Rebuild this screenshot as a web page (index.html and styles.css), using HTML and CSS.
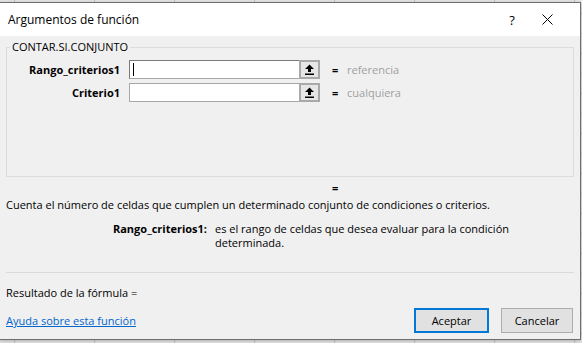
FILE: index.html
```html
<!DOCTYPE html>
<html lang="es">
<head>
    <meta charset="UTF-8">
    <title>Argumentos de función</title>
    <link rel="stylesheet" href="styles.css">
</head>
<body>
    <div class="dialog">
        <div class="titlebar">
            <span class="title">Argumentos de función</span>
            <span class="help">?</span>
            <span class="close">
                <svg width="11" height="11" viewBox="0 0 11 11"><path d="M0.5 0.5 L10.5 10.5 M10.5 0.5 L0.5 10.5" stroke="#000" stroke-width="1" fill="none"/></svg>
            </span>
        </div>

        <div class="content">
            <fieldset class="group">
                <legend>CONTAR.SI.CONJUNTO</legend>

                <div class="arg-row">
                    <label for="rango">Rango_criterios1</label>
                    <div class="ref-box">
                        <input type="text" id="rango" class="focused">
                        <span class="caret"></span>
                        <span class="collapse-btn">
                            <svg width="11" height="11" viewBox="0 0 11 11"><path d="M5.5 0.5 L10 5 L7 5 L7 8 L4 8 L4 5 L1 5 Z" fill="#000"/><rect x="1" y="9.5" width="9" height="1.5" fill="#000"/></svg>
                        </span>
                    </div>
                    <span class="eq">=</span>
                    <span class="hint">referencia</span>
                </div>

                <div class="arg-row">
                    <label for="criterio">Criterio1</label>
                    <div class="ref-box">
                        <input type="text" id="criterio">
                        <span class="collapse-btn">
                            <svg width="11" height="11" viewBox="0 0 11 11"><path d="M5.5 0.5 L10 5 L7 5 L7 8 L4 8 L4 5 L1 5 Z" fill="#000"/><rect x="1" y="9.5" width="9" height="1.5" fill="#000"/></svg>
                        </span>
                    </div>
                    <span class="eq">=</span>
                    <span class="hint">cualquiera</span>
                </div>
            </fieldset>

            <div class="total-eq">=</div>
            <p class="desc">Cuenta el número de celdas que cumplen un determinado conjunto de condiciones o criterios.</p>

            <div class="arg-help">
                <b>Rango_criterios1:</b>
                <span>es el rango de celdas que desea evaluar para la condición determinada.</span>
            </div>

            <hr class="sep">

            <p class="result">Resultado de la fórmula =</p>

            <div class="footer">
                <a href="#" class="help-link">Ayuda sobre esta función</a>
                <div class="buttons">
                    <button class="btn default">Aceptar</button>
                    <button class="btn">Cancelar</button>
                </div>
            </div>
        </div>
    </div>
</body>
</html>
```

FILE: styles.css
```css
body {
    margin: 0;
    width: 582px;
    height: 343px;
    overflow: hidden;
    font-family: "Open Sans", "Noto Sans", sans-serif;
    font-size: 11px;
    color: #000;
    background-color: #e6e6e6;
    background-image:
        repeating-linear-gradient(90deg, transparent 0, transparent 14px, #c4c4c4 14px, #c4c4c4 15px, transparent 15px, transparent 80px),
        repeating-linear-gradient(180deg, transparent 0, transparent 13px, #c4c4c4 13px, #c4c4c4 14px, transparent 14px, transparent 20px);
}
.dialog {
    box-sizing: border-box;
    width: 582px;
    height: 338px;
    margin: 2px 0 0 -1px;
    border: 1px solid #6f6f6f;
    background: #f0f0f0;
    box-shadow: 0 1px 4px rgba(0, 0, 0, 0.25);
}
.titlebar {
    height: 33px;
    background: #fff;
    display: flex;
    align-items: center;
    padding-left: 8px;
    font-size: 12px;
}
.title {
    flex: 1;
}
.help {
    width: 12px;
    text-align: center;
    margin-right: 24px;
    font-size: 13px;
}
.close {
    width: 11px;
    display: flex;
    margin-right: 27px;
}
.content {
    padding: 4px 6px 0 6px;
}
.group {
    margin: 0;
    padding: 6px 3px 74px 3px;
    border: 1px solid #dcdcdc;
}
.group legend {
    padding: 0 2px;
    line-height: 14px;
}
.arg-row {
    display: flex;
    align-items: center;
    height: 19px;
    margin-bottom: 4px;
}
.arg-row:last-child {
    margin-bottom: 0;
}
.arg-row label {
    width: 110px;
    text-align: right;
    font-weight: bold;
    margin-right: 9px;
}
.ref-box {
    position: relative;
    display: flex;
    width: 191px;
    height: 19px;
}
.ref-box input {
    box-sizing: border-box;
    flex: 1;
    width: 0;
    min-width: 0;
    height: 19px;
    margin: 0;
    padding: 0 3px;
    border: 1px solid #a8a8a8;
    border-right: none;
    background: #fff;
    outline: none;
}
.ref-box input.focused {
    border-left-color: #7a7a7a;
    border-top-color: #7a7a7a;
}
.caret {
    position: absolute;
    left: 4px;
    top: 3px;
    width: 1px;
    height: 13px;
    background: #000;
}
.collapse-btn {
    box-sizing: border-box;
    width: 21px;
    height: 19px;
    border: 2px solid #a9a9a9;
    background: #e6e6e6;
    display: flex;
    align-items: center;
    justify-content: center;
}
.eq {
    margin-left: 12px;
    width: 15px;
    font-weight: bold;
}
.hint {
    color: #a0a0a0;
}
.total-eq {
    margin: 4px 0 0 326px;
    line-height: 14px;
    font-weight: bold;
}
.desc {
    margin: 3px 0 0;
    line-height: 14px;
}
.arg-help {
    display: grid;
    grid-template-columns: 201px 310px;
    column-gap: 8px;
    margin-top: 10px;
    line-height: 14px;
}
.arg-help b {
    text-align: right;
}
.sep {
    margin: 22px 0 0;
    border: none;
    border-top: 1px solid #dadada;
}
.result {
    margin: 13px 0 0;
    line-height: 14px;
}
.footer {
    display: flex;
    align-items: center;
    justify-content: space-between;
    margin-top: 8px;
}
.help-link {
    color: #0066cc;
}
.buttons {
    display: flex;
    gap: 12px;
    margin-right: 1px;
}
.btn {
    box-sizing: border-box;
    height: 25px;
    width: 72px;
    font-family: inherit;
    font-size: 11px;
    background: #e1e1e1;
    border: 1px solid #adadad;
    padding: 0;
}
.btn.default {
    width: 75px;
    border: 2px solid #0078d7;
}
```
